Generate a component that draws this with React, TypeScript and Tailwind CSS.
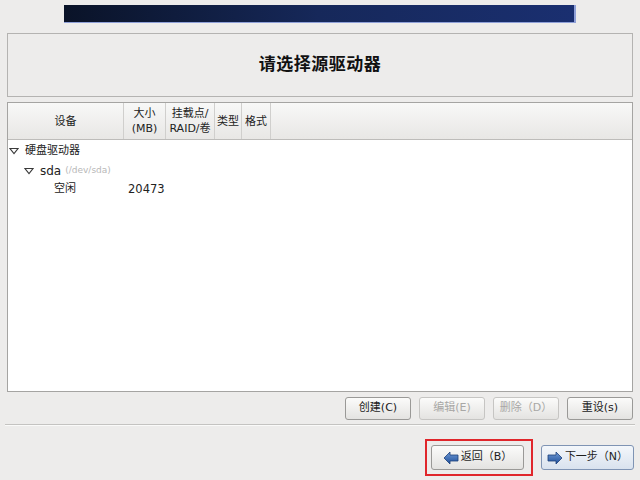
const font = { fontFamily: '"DejaVu Sans", "Noto Sans CJK SC", sans-serif' }

function Tri({ className = '' }: { className?: string }) {
  return (
    <svg width="10" height="8" viewBox="0 0 10 8" className={className}>
      <path d="M1 1.5 L9 1.5 L5 6.5 Z" fill="none" stroke="#3a3a3a" strokeWidth="1.1" />
    </svg>
  )
}

function ArrowLeft() {
  return (
    <svg width="16" height="14" viewBox="0 0 16 14">
      <defs>
        <linearGradient id="al" x1="0" y1="0" x2="0" y2="1">
          <stop offset="0" stopColor="#6f9ad6" />
          <stop offset="1" stopColor="#1f4f9a" />
        </linearGradient>
      </defs>
      <path d="M1 7 L7 1 L7 4 L15 4 L15 10 L7 10 L7 13 Z" fill="url(#al)" stroke="#1c3f7a" strokeWidth="0.8" />
    </svg>
  )
}

function ArrowRight() {
  return (
    <svg width="16" height="14" viewBox="0 0 16 14">
      <defs>
        <linearGradient id="ar" x1="0" y1="0" x2="0" y2="1">
          <stop offset="0" stopColor="#6f9ad6" />
          <stop offset="1" stopColor="#1f4f9a" />
        </linearGradient>
      </defs>
      <path d="M15 7 L9 1 L9 4 L1 4 L1 10 L9 10 L9 13 Z" fill="url(#ar)" stroke="#1c3f7a" strokeWidth="0.8" />
    </svg>
  )
}

function Btn({ label, disabled = false }: { label: string; disabled?: boolean }) {
  return (
    <div
      className={`w-[66px] h-[23px] rounded-[3px] border flex items-center justify-center text-[11px] bg-gradient-to-b from-[#fbfbfa] to-[#e4e3e1] ${
        disabled ? 'border-[#c6c5c3] text-[#a8a7a5]' : 'border-[#9a9997] text-[#1a1a1a]'
      }`}
    >
      {label}
    </div>
  )
}

export default function App() {
  return (
    <div className="w-[640px] h-[480px] bg-[#edeceb] flex flex-col text-[#1e1e1e]" style={font}>
      {/* banner */}
      <div className="mt-[5px] mx-auto w-[512px] h-[18px] bg-gradient-to-r from-[#0a1328] via-[#16285a] to-[#1a2f70] border-r-2 border-b border-[#8fa0d8]" />

      {/* title */}
      <div className="mt-[10px] mx-[7px] h-[64px] border border-[#b4b3b1] flex items-center justify-center">
        <span className="text-[17px] font-bold tracking-[0.5px] text-[#111]">请选择源驱动器</span>
      </div>

      {/* device table */}
      <div className="mt-[5px] mx-[7px] h-[290px] border border-[#a5a4a2] bg-white flex flex-col">
        <div className="h-[37px] flex bg-gradient-to-b from-[#f8f8f7] to-[#e8e7e5] border-b border-[#bdbcba] text-[11px] leading-[15px] text-[#222]">
          <div className="w-[116px] flex items-center justify-center border-r border-[#d0cfcd]">设备</div>
          <div className="w-[42px] flex flex-col items-center justify-center border-r border-[#d0cfcd]">
            <span>大小</span>
            <span>(MB)</span>
          </div>
          <div className="w-[49px] flex flex-col items-center justify-center border-r border-[#d0cfcd]">
            <span>挂载点/</span>
            <span>RAID/卷</span>
          </div>
          <div className="w-[27px] flex items-center justify-center border-r border-[#d0cfcd]">类型</div>
          <div className="w-[29px] flex items-center justify-center border-r border-[#d0cfcd]">格式</div>
        </div>
        <div className="flex flex-col text-[11px] text-[#222] pt-[1px]">
          <div className="h-[20px] flex items-center">
            <Tri className="ml-[1px] mr-[6px]" />
            <span>硬盘驱动器</span>
          </div>
          <div className="h-[19px] flex items-center">
            <Tri className="ml-[16px] mr-[6px]" />
            <span className="text-[12px]">sda</span>
            <span className="ml-[4px] text-[9px] text-[#b8b8b8]">(/dev/sda)</span>
          </div>
          <div className="h-[19px] flex items-center">
            <span className="ml-[46px] w-[74px]">空闲</span>
            <span className="text-[11.5px]">20473</span>
          </div>
        </div>
      </div>

      {/* action buttons */}
      <div className="mt-[5px] flex justify-end gap-[8px] pr-[7px]">
        <Btn label="创建(C)" />
        <Btn label="编辑(E)" disabled />
        <Btn label="删除（D）" disabled />
        <Btn label="重设(s)" />
      </div>

      <div className="mt-[4px] mx-[5px] h-[2px] border-t border-[#c4c3c1] border-b border-b-[#fafaf9]" />

      {/* navigation */}
      <div className="mt-[13px] flex justify-end items-center pr-[6px]">
        <div className="border-2 border-[#e0262b] pt-[4px] pb-[4px] pl-[4px] pr-[7px]">
          <div className="w-[93px] h-[25px] rounded-[3px] border border-[#9a9997] bg-gradient-to-b from-[#fbfbfa] to-[#e4e3e1] flex items-center justify-center gap-[2px] text-[11px]">
            <ArrowLeft />
            <span>返回（B）</span>
          </div>
        </div>
        <div className="ml-[8px] w-[93px] h-[25px] rounded-[3px] border border-[#7f94b4] bg-gradient-to-b from-[#f4f7fb] to-[#d9e2ee] flex items-center justify-center gap-[2px] text-[11px]">
          <ArrowRight />
          <span>下一步（N）</span>
        </div>
      </div>
    </div>
  )
}
